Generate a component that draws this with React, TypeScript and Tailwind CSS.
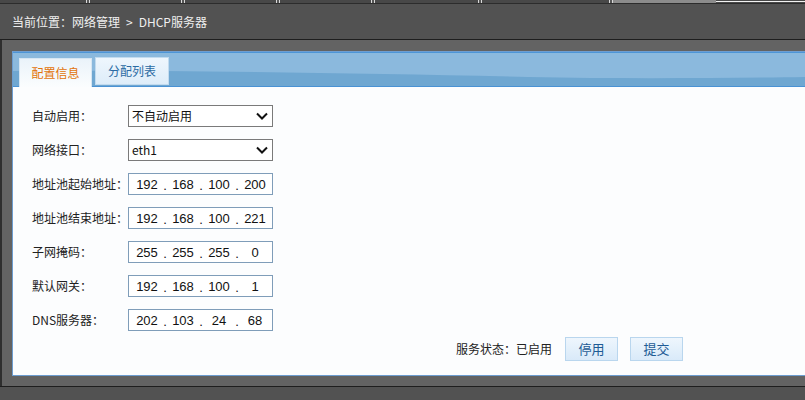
import React from 'react';

const cjk = '"Noto Sans CJK SC", "Liberation Sans", sans-serif';

const IpInput = ({ ip }: { ip: string[] }) => (
  <div className="flex items-center w-[145px] h-[22px] border border-[#7f9db9] bg-white pl-[3px] text-[13px] text-[#111]" style={{ fontFamily: '"Liberation Sans", Arial, sans-serif' }}>
    {ip.map((part, i) => (
      <React.Fragment key={i}>
        <span className="w-[30px] text-center leading-none">{part}</span>
        {i < 3 && <span className="w-[6px] text-center leading-none pt-[3px]">.</span>}
      </React.Fragment>
    ))}
  </div>
);

const Select = ({ value }: { value: string }) => (
  <div className="flex items-center justify-between w-[145px] h-[22px] border border-[#7a7a7a] bg-white pl-[3px] pr-[4px] text-[12px] text-[#111]">
    <span>{value}</span>
    <svg width="12" height="8" viewBox="0 0 12 8">
      <path d="M1 1.5 L6 6.5 L11 1.5" fill="none" stroke="#111" strokeWidth="2" />
    </svg>
  </div>
);

const App = () => {
  const marks = [86, 181, 276, 371, 478, 609];
  const rows: { label: string; kind: 'select' | 'ip'; value: string | string[] }[] = [
    { label: '自动启用：', kind: 'select', value: '不自动启用' },
    { label: '网络接口：', kind: 'select', value: 'eth1' },
    { label: '地址池起始地址：', kind: 'ip', value: ['192', '168', '100', '200'] },
    { label: '地址池结束地址：', kind: 'ip', value: ['192', '168', '100', '221'] },
    { label: '子网掩码：', kind: 'ip', value: ['255', '255', '255', '0'] },
    { label: '默认网关：', kind: 'ip', value: ['192', '168', '100', '1'] },
    { label: 'DNS服务器：', kind: 'ip', value: ['202', '103', '24', '68'] },
  ];

  return (
    <div className="w-[805px] h-[400px] bg-[#525252] flex flex-col overflow-hidden" style={{ fontFamily: cjk }}>
      {/* top strip */}
      <div className="relative h-[4px] bg-[#484848] border-b border-[#2c2c2c]">
        {marks.map((x) => (
          <div key={x} className="absolute top-0 w-[4px] h-[3px] border-x border-[#d8d8d8] bg-[#555]" style={{ left: x }} />
        ))}
        <div className="absolute top-0 left-[613px] w-[103px] h-[3px] bg-[#8c8c8c]" />
        <div className="absolute top-[1px] left-[716px] right-0 h-[1px] bg-[#f2f2f2]" />
      </div>

      {/* breadcrumb */}
      <div className="h-[35px] flex items-center pl-[12px] text-[12px] text-[#efefef]">
        当前位置：网络管理 <span className="mx-[6px]">&gt;</span> DHCP服务器
      </div>
      <div className="h-px bg-[#1e1e1e]" />

      {/* main area */}
      <div className="h-[346px] bg-[#636363] border-l-2 border-[#2e2e2e] pl-[10px] pt-[11px] pb-[10px]">
        <div className="h-full bg-[#fcfdfe] border-l border-y border-[#6d9dd0] flex flex-col">
          {/* tab bar */}
          <div className="relative h-[35px] bg-[#8bb9dd] border-t border-[#4d95d6] border-b border-b-[#4a92d4] flex items-end pl-[6px] gap-[3px]">
            <svg className="absolute inset-0 w-full h-full" viewBox="0 0 800 33" preserveAspectRatio="none">
              <path d="M0 18 C 150 17, 350 20, 520 24 C 620 26, 720 25, 800 24 L800 33 L0 33 Z" fill="#6fa7d1" />
            </svg>
            <div className="relative w-[73px] h-[29px] mb-[-1px] bg-gradient-to-b from-[#eaf3fa] to-[#fbfdfe] border-t border-x border-[#d6e6f3] flex items-center justify-center text-[12px] text-[#e2740a]">
              配置信息
            </div>
            <div className="relative w-[74px] h-[28px] mb-[1px] bg-gradient-to-b from-[#eef6fd] to-[#deedf9] border border-[#c2dbef] flex items-center justify-center text-[12px] text-[#2b6aa3]">
              分配列表
            </div>
          </div>

          {/* form */}
          <div className="flex flex-col gap-[12px] pt-[18px] pl-[19px]">
            {rows.map((r) => (
              <div key={r.label} className="flex items-center">
                <div className="w-[96px] text-[12px] text-[#222]">{r.label}</div>
                {r.kind === 'select' ? <Select value={r.value as string} /> : <IpInput ip={r.value as string[]} />}
              </div>
            ))}
          </div>

          <div className="flex items-center justify-end pr-[122px] mt-[6px] text-[12px] text-[#222]">
            <span>服务状态：已启用</span>
            <button className="ml-[13px] w-[53px] h-[24px] bg-gradient-to-b from-[#eef6fd] to-[#d9eaf9] border border-[#b9d6ee] text-[13px] text-[#1d5b95]">停用</button>
            <button className="ml-[12px] w-[53px] h-[24px] bg-gradient-to-b from-[#eef6fd] to-[#d9eaf9] border border-[#b9d6ee] text-[13px] text-[#1d5b95]">提交</button>
          </div>
        </div>
      </div>
      <div className="h-px bg-[#1e1e1e]" />
    </div>
  );
};

export default App;
